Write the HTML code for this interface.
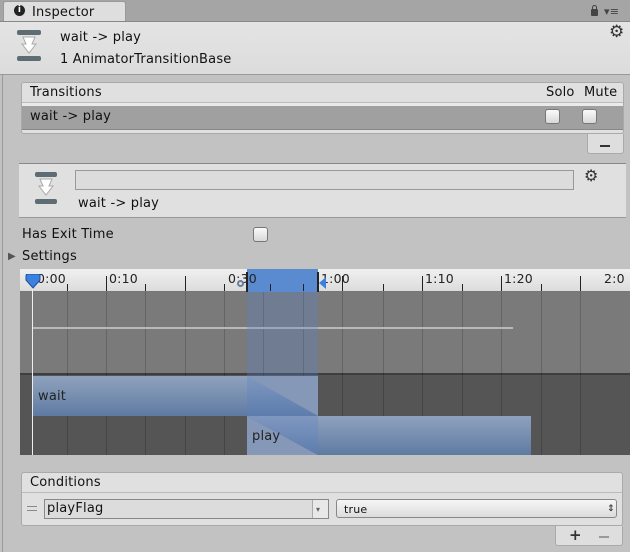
<!DOCTYPE html><html><head><style>
*{margin:0;padding:0;box-sizing:border-box}
body{width:630px;height:552px;background:#c2c2c2;font-family:"DejaVu Sans","Liberation Sans",sans-serif;font-size:13px;letter-spacing:0.2px;color:#111;position:relative;overflow:hidden}
.a{position:absolute}
.t{position:absolute;white-space:nowrap;line-height:15px}
.cb{position:absolute;width:15px;height:15px;border:1px solid #777;border-radius:3px;background:linear-gradient(#fafafa,#d8d8d8)}
.vl{position:absolute;width:1px;background:rgba(0,0,0,.18)}
.tk{position:absolute;width:1px;background:#222}
.rl{position:absolute;top:272px;font-size:12.5px;color:#222;line-height:14px}
</style></head><body>
<div class="a" style="left:0;top:0;width:630px;height:21px;background:#a5a5a5"></div>
<div class="a" style="left:3px;top:1px;width:123px;height:21px;background:#dedede;border:1px solid #999;border-bottom:none;border-radius:3px 3px 0 0"></div>
<div class="a" style="left:14px;top:5px;width:11px;height:11px;border-radius:50%;background:#222;color:#fff;font-size:9px;font-weight:bold;text-align:center;line-height:11px">i</div>
<div class="t" style="left:32px;top:5px;font-size:13px">Inspector</div>
<div class="a" style="left:591px;top:9px;width:7px;height:7px;background:#444;border-radius:1px"></div>
<div class="a" style="left:592px;top:5px;width:5px;height:6px;border:1.5px solid #444;border-bottom:none;border-radius:3px 3px 0 0"></div>
<div class="t" style="left:604px;top:4px;font-size:11px;color:#444">▾≡</div>
<div class="a" style="left:0;top:21px;width:630px;height:54px;background:linear-gradient(#e4e4e4,#dcdcdc);border-top:1px solid #888;border-bottom:1px solid #999"></div>
<div class="a" style="left:2px;top:75px;width:1px;height:477px;background:#999"></div>
<svg class="a" style="left:14px;top:28px" width="32" height="36"><rect x="3" y="2" width="24" height="5" rx="2" fill="#5e6c74"/><rect x="3" y="28" width="24" height="5" rx="2" fill="#5e6c74"/><path d="M9 9 L21 9 L18 16 L22 16 L15 25 L8 16 L12 16 Z" fill="#fff" stroke="#aaa" stroke-width="1"/></svg>
<div class="t" style="left:60px;top:30px">wait -&gt; play</div>
<div class="t" style="left:60px;top:52px">1 AnimatorTransitionBase</div>
<div class="t" style="left:609px;top:25px;font-size:17px;color:#333">⚙</div>
<div class="a" style="left:21px;top:82px;width:603px;height:52px;background:#e0e0e0;border:1px solid #aaa;border-radius:3px"></div>
<div class="a" style="left:22px;top:102px;width:601px;height:4px;background:#eaeaea;border-top:1px solid #bbb"></div>
<div class="t" style="left:30px;top:85px">Transitions</div>
<div class="t" style="left:546px;top:85px">Solo</div>
<div class="t" style="left:584px;top:85px">Mute</div>
<div class="a" style="left:22px;top:106px;width:601px;height:24px;background:#a0a0a0;border-bottom:1px solid #888"></div>
<div class="t" style="left:30px;top:109px">wait -&gt; play</div>
<div class="cb" style="left:545px;top:109px"></div>
<div class="cb" style="left:582px;top:109px"></div>
<div class="a" style="left:587px;top:134px;width:37px;height:20px;background:#dedede;border:1px solid #aaa;border-top:none;border-radius:0 0 3px 3px"></div>
<div class="a" style="left:600px;top:145px;width:10px;height:2px;background:#333"></div>
<div class="a" style="left:19px;top:163px;width:607px;height:55px;background:#e0e0e0;border-top:1px solid #888;border-bottom:1px solid #999"></div>
<svg class="a" style="left:33px;top:170px" width="28" height="36"><rect x="2" y="2" width="22" height="5" rx="2" fill="#5e6c74"/><rect x="2" y="29" width="22" height="5" rx="2" fill="#5e6c74"/><path d="M7 9 L19 9 L16 16 L20 16 L13 25 L6 16 L10 16 Z" fill="#fff" stroke="#aaa"/></svg>
<div class="a" style="left:75px;top:170px;width:499px;height:20px;background:#dcdcdc;border:1px solid #999"></div>
<div class="t" style="left:584px;top:168px;font-size:16px;color:#333">⚙</div>
<div class="t" style="left:78px;top:196px">wait -&gt; play</div>
<div class="t" style="left:22px;top:227px">Has Exit Time</div>
<div class="cb" style="left:253px;top:227px"></div>
<div class="t" style="left:8px;top:249px;font-size:10px;color:#555">▶</div>
<div class="t" style="left:22px;top:249px">Settings</div>
<div class="a" style="left:20px;top:269px;width:610px;height:23px;background:linear-gradient(#f0f0f0,#dcdcdc);border-bottom:1px solid #777"></div>
<div class="a" style="left:20px;top:292px;width:610px;height:81px;background:#7a7a7a"></div>
<div class="a" style="left:20px;top:373px;width:610px;height:82px;background:#555;border-top:2px solid #3e3e3e"></div>
<div class="a" style="left:247px;top:269px;width:71px;height:23px;background:#5a8ad0"></div>
<div class="vl" style="left:67px;top:292px;height:163px"></div><div class="vl" style="left:106px;top:292px;height:163px"></div><div class="vl" style="left:145px;top:292px;height:163px"></div><div class="vl" style="left:185px;top:292px;height:163px"></div><div class="vl" style="left:224px;top:292px;height:163px"></div><div class="vl" style="left:263px;top:292px;height:163px"></div><div class="vl" style="left:303px;top:292px;height:163px"></div><div class="vl" style="left:342px;top:292px;height:163px"></div><div class="vl" style="left:383px;top:292px;height:163px"></div><div class="vl" style="left:422px;top:292px;height:163px"></div><div class="vl" style="left:462px;top:292px;height:163px"></div><div class="vl" style="left:501px;top:292px;height:163px"></div><div class="vl" style="left:541px;top:292px;height:163px"></div><div class="vl" style="left:580px;top:292px;height:163px"></div>
<div class="tk" style="left:106px;top:276px;height:15px"></div><div class="tk" style="left:185px;top:276px;height:15px"></div><div class="tk" style="left:342px;top:276px;height:15px"></div><div class="tk" style="left:422px;top:276px;height:15px"></div><div class="tk" style="left:501px;top:276px;height:15px"></div><div class="tk" style="left:580px;top:276px;height:15px"></div>
<div class="tk" style="left:67px;top:284px;height:7px"></div><div class="tk" style="left:145px;top:284px;height:7px"></div><div class="tk" style="left:224px;top:284px;height:7px"></div><div class="tk" style="left:270px;top:284px;height:7px"></div><div class="tk" style="left:303px;top:284px;height:7px"></div><div class="tk" style="left:383px;top:284px;height:7px"></div><div class="tk" style="left:462px;top:284px;height:7px"></div><div class="tk" style="left:541px;top:284px;height:7px"></div>
<div class="tk" style="left:246px;top:272px;height:20px;width:2px"></div><div class="tk" style="left:317px;top:272px;height:20px;width:2px"></div>
<div class="rl" style="left:37px">0:00</div><div class="rl" style="left:109px">0:10</div><div class="rl" style="left:228px">0:30</div><div class="rl" style="left:321px">1:00</div><div class="rl" style="left:425px">1:10</div><div class="rl" style="left:504px">1:20</div><div class="rl" style="left:604px">2:0</div>
<div class="a" style="left:32px;top:327px;width:481px;height:2px;background:#b8b8b8"></div>
<div class="a" style="left:33px;top:376px;width:285px;height:40px;background:linear-gradient(#8fa2bd,#5f7ba2)"></div>
<svg class="a" style="left:247px;top:376px" width="71" height="79"><polygon points="0,0 71,40 71,0" fill="#9aa3b0"/><polygon points="0,40 71,79 0,79" fill="#9aa3b0"/></svg>
<div class="a" style="left:318px;top:416px;width:213px;height:39px;background:linear-gradient(#8fa2bd,#5f7ba2)"></div>
<div class="a" style="left:247px;top:416px;width:71px;height:39px;background:linear-gradient(#8fa2bd,#5f7ba2);clip-path:polygon(0 0,100% 100%,100% 0)"></div>
<div class="a" style="left:247px;top:376px;width:71px;height:40px;background:linear-gradient(#8fa2bd,#5f7ba2);clip-path:polygon(0 0,100% 100%,0 100%)"></div>
<div class="a" style="left:247px;top:292px;width:71px;height:163px;background:rgba(90,130,200,.3)"></div>
<div class="t" style="left:38px;top:389px;color:#222">wait</div>
<div class="t" style="left:252px;top:429px;color:#222">play</div>
<div class="a" style="left:32px;top:286px;width:1px;height:169px;background:#eee"></div>
<svg class="a" style="left:24px;top:274px" width="18" height="16"><path d="M2 2 Q2 0 4 0 L14 0 Q16 0 16 2 L16 6 L9 14 L2 6 Z" fill="#3b82e0" stroke="#1d4f9a"/></svg>
<svg class="a" style="left:318px;top:276px" width="10" height="14"><path d="M8 1 L8 13 L1 7 Z" fill="#3b82e0"/></svg>
<div class="a" style="left:237px;top:280px;width:7px;height:7px;border-radius:50%;border:2px solid #6a7f99"></div>
<div class="a" style="left:21px;top:472px;width:602px;height:54px;background:#e0e0e0;border:1px solid #aaa;border-radius:3px"></div>
<div class="a" style="left:22px;top:492px;width:600px;height:1px;background:#bbb"></div>
<div class="t" style="left:30px;top:475px">Conditions</div>
<div class="a" style="left:27px;top:506px;width:10px;height:1px;background:#888"></div><div class="a" style="left:27px;top:510px;width:10px;height:1px;background:#888"></div>
<div class="a" style="left:44px;top:499px;width:285px;height:20px;background:#dcdcdc;border:1px solid #888"></div>
<div class="a" style="left:312px;top:500px;width:16px;height:18px;background:#e8e8e8;border-left:1px solid #aaa"></div>
<div class="t" style="left:316px;top:502px;font-size:8px;color:#666">▾</div>
<div class="t" style="left:47px;top:501px">playFlag</div>
<div class="a" style="left:336px;top:499px;width:281px;height:19px;background:linear-gradient(#f6f6f6,#dcdcdc);border:1px solid #888;border-radius:3px"></div>
<div class="t" style="left:344px;top:502px;font-size:11px">true</div>
<div class="t" style="left:607px;top:502px;font-size:9px">⇕</div>
<div class="a" style="left:555px;top:526px;width:68px;height:20px;background:#dedede;border:1px solid #aaa;border-top:none;border-radius:0 0 3px 3px"></div>
<div class="t" style="left:569px;top:528px;font-size:15px;font-weight:bold;color:#333">+</div>
<div class="a" style="left:599px;top:536px;width:10px;height:2px;background:#999"></div>
</body></html>
